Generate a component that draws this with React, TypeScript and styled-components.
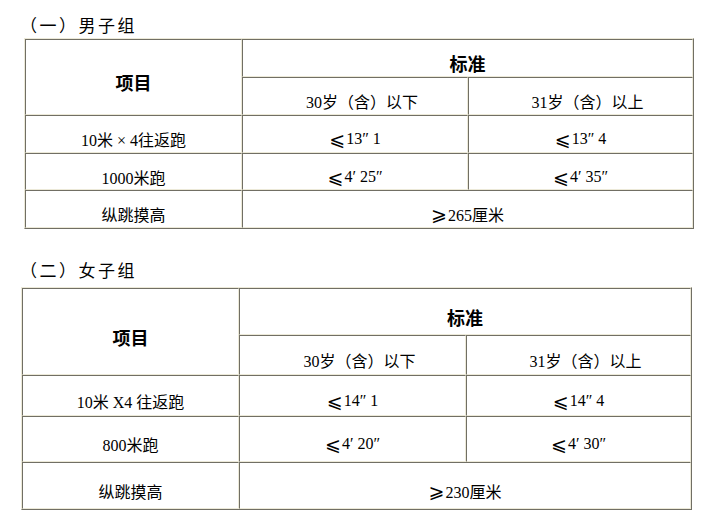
import styled, { createGlobalStyle } from 'styled-components';

const GlobalStyle = createGlobalStyle`
    html, body {
        margin: 0;
        padding: 0;
        background: #ffffff;
    }
    body {
        font-family: 'Liberation Serif', 'Noto Sans CJK SC', 'DejaVu Sans', serif;
        color: #000000;
        text-spacing-trim: space-all;
    }
`;

const DARK = '#716f64';
const LIGHT = '#ece9d8';

const Page = styled.div`
    width: 719px;
    padding-top: 15px;
`;

const Title = styled.div<{ $top: number; $bottom: number }>`
    height: 20px;
    line-height: 20px;
    font-size: 17px;
    letter-spacing: 2.5px;
    padding-left: 20px;
    margin-top: ${({ $top }) => $top}px;
    margin-bottom: ${({ $bottom }) => $bottom}px;
    font-family: 'Noto Sans CJK SC', sans-serif;
`;

const Table = styled.div<{ $cols: number[]; $rows: number[]; $left: number }>`
    display: grid;
    grid-template-columns: ${({ $cols }) => $cols.map((c) => `${c}px`).join(' ')};
    grid-template-rows: ${({ $rows }) => $rows.map((r) => `${r}px`).join(' ')};
    width: fit-content;
    margin-left: ${({ $left }) => $left}px;
    border-top: 1px solid ${LIGHT};
    border-left: 1px solid ${LIGHT};
    border-right: 1px solid ${DARK};
    border-bottom: 1px solid ${DARK};
`;

const Cell = styled.div<{ $col?: string; $row?: string; $head?: boolean; $shift?: number }>`
    box-sizing: border-box;
    grid-column: ${({ $col }) => $col || 'auto'};
    grid-row: ${({ $row }) => $row || 'auto'};
    display: flex;
    align-items: center;
    justify-content: center;
    padding-top: 10px;
    padding-left: ${({ $shift }) => $shift || 0}px;
    border-top: 1px solid ${DARK};
    border-left: 1px solid ${DARK};
    border-right: 1px solid ${LIGHT};
    border-bottom: 1px solid ${LIGHT};
    font-size: ${({ $head }) => ($head ? '18px' : '16px')};
    font-weight: ${({ $head }) => ($head ? 'bold' : 'normal')};
    white-space: pre;
`;

const Sym = styled.span`
    font-family: 'DejaVu Sans', sans-serif;
    font-size: 19px;
    line-height: 16px;
    margin-right: 1px;
`;

interface Group {
    title: string;
    top: number;
    bottom: number;
    left: number;
    cols: number[];
    rows: number[];
    items: [string, string, string][];
    jump: string;
}

const groups: Group[] = [
    {
        title: '（一）男子组',
        top: 0,
        bottom: 3,
        left: 24,
        cols: [217, 226, 225],
        rows: [38, 38, 38, 37, 38],
        items: [
            ['10米 × 4往返跑', '⩽13″ 1', '⩽13″ 4'],
            ['1000米跑', '⩽4′ 25″', '⩽4′ 35″'],
        ],
        jump: '⩾265厘米',
    },
    {
        title: '（二）女子组',
        top: 31,
        bottom: 7,
        left: 21,
        cols: [217, 227, 225],
        rows: [47, 40, 41, 46, 47],
        items: [
            ['10米 X4 往返跑', '⩽14″ 1', '⩽14″ 4'],
            ['800米跑', '⩽4′ 20″', '⩽4′ 30″'],
        ],
        jump: '⩾230厘米',
    },
];

// the leading comparison sign is drawn larger than the digits after it
function Value({ text }: { text: string }) {
    return (
        <>
            <Sym>{text[0]}</Sym>
            {text.slice(1)}
        </>
    );
}

function Row({ name, a, b }: { name: string; a: string; b: string }) {
    return (
        <>
            <Cell>{name}</Cell>
            <Cell>
                <Value text={a} />
            </Cell>
            <Cell>
                <Value text={b} />
            </Cell>
        </>
    );
}

export default function App() {
    return (
        <Page>
            <GlobalStyle />
            {groups.map((g) => (
                <section key={g.title}>
                    <Title $top={g.top} $bottom={g.bottom}>
                        {g.title}
                    </Title>
                    <Table $cols={g.cols} $rows={g.rows} $left={g.left}>
                        <Cell $row="span 2" $head>
                            项目
                        </Cell>
                        <Cell $col="span 2" $head>
                            标准
                        </Cell>
                        <Cell $shift={14}>30岁（含）以下</Cell>
                        <Cell $shift={14}>31岁（含）以上</Cell>
                        {g.items.map(([name, a, b]) => (
                            <Row key={name} name={name} a={a} b={b} />
                        ))}
                        <Cell>纵跳摸高</Cell>
                        <Cell $col="span 2">
                            <Value text={g.jump} />
                        </Cell>
                    </Table>
                </section>
            ))}
        </Page>
    );
}
